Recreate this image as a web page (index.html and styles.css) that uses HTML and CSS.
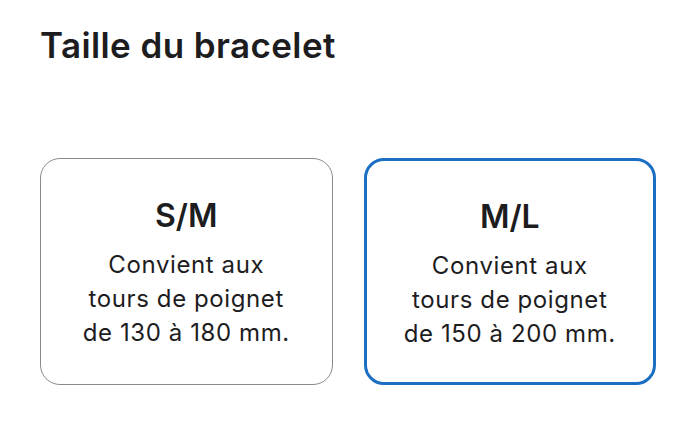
FILE: index.html
```html
<!DOCTYPE html>
<html lang="fr">
<head>
  <meta charset="UTF-8">
  <title>Taille du bracelet</title>
  <link rel="stylesheet" href="styles.css">
</head>
<body>
  <section class="size-picker">
    <h1>Taille du bracelet</h1>
    <div class="size-grid">
      <div class="size-card">
        <h2>S/M</h2>
        <p>Convient aux<br>tours de poignet<br>de 130 à 180 mm.</p>
      </div>
      <div class="size-card selected">
        <h2>M/L</h2>
        <p>Convient aux<br>tours de poignet<br>de 150 à 200 mm.</p>
      </div>
    </div>
  </section>
</body>
</html>
```

FILE: styles.css
```css
body {
  margin: 0;
  background: #ffffff;
  font-family: Inter, "Noto Sans", Arial, sans-serif;
  color: #1d1d1f;
}

.size-picker {
  padding: 25px 44px 0 40px;
}

.size-picker h1 {
  margin: 0;
  font-size: 35px;
  font-weight: 600;
  letter-spacing: 0.4px;
  line-height: 40px;
}

.size-grid {
  display: grid;
  grid-template-columns: 1fr 1fr;
  gap: 31px;
  margin-top: 93px;
}

.size-card {
  height: 227px;
  box-sizing: border-box;
  border: 1.5px solid #8a8a8e;
  border-radius: 20px;
  text-align: center;
  padding-top: 37px;
}

.size-card.selected {
  border: 3px solid #1a6fc2;
  padding-top: 35.5px;
}

.size-card h2 {
  margin: 0;
  font-size: 32px;
  font-weight: 600;
  line-height: 40px;
}

.size-card p {
  margin: 12px 0 0;
  font-size: 24px;
  letter-spacing: 0.6px;
  line-height: 34px;
  color: #1d1d1f;
}
```
